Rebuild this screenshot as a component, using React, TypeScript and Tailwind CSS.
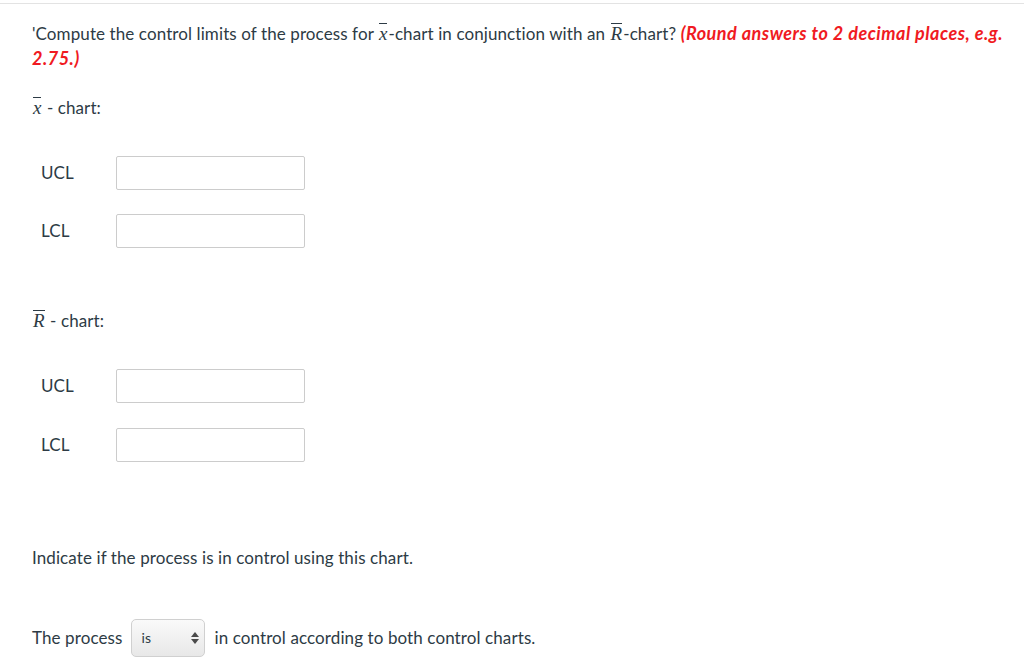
import React from "react";

const TEXT = "text-[#2d3b45]";

function Bar({ children }: { children: React.ReactNode }) {
  // variable with a bar over it, as in the MathJax rendering
  return (
    <span className="inline-block italic font-['Liberation_Serif',serif] text-[19px] leading-[17px] tracking-normal border-t-[1.5px] border-[#2d3b45] pt-[1px] mx-[1px]">
      {children}
    </span>
  );
}

function LimitRow({ label }: { label: string }) {
  return (
    <div className="flex items-center pl-[9px]">
      <span className="w-[75px]">{label}</span>
      <input
        type="text"
        className="w-[189px] h-[34px] border border-[#cccccc] rounded-[2px] bg-white outline-none"
      />
    </div>
  );
}

export default function App() {
  return (
    <div className={`min-h-[660px] bg-white font-['Lato','Noto_Sans',sans-serif] ${TEXT}`}>
      <div className="pt-[3px]">
        <div className="border-t border-[#e3e3e3]" />
      </div>
      <div className="pl-[32px] pr-[8px] pt-[17px] text-[17px] leading-[24px] tracking-[0.1px]">
        <p>
          'Compute the control limits of the process for <Bar>x</Bar>-chart in conjunction with an{" "}
          <Bar>R</Bar>-chart?{" "}
          <span className="font-bold italic text-[18px] tracking-[0.5px] text-[#f01a22]">
            (Round answers to 2 decimal places, e.g.
            <br />
            2.75.)
          </span>
        </p>

        <p className="mt-[25px]">
          <Bar>x</Bar> - chart:
        </p>

        <div className="mt-[36px] flex flex-col gap-[24px]">
          <LimitRow label="UCL" />
          <LimitRow label="LCL" />
        </div>

        <p className="mt-[61px]">
          <Bar>R</Bar> - chart:
        </p>

        <div className="mt-[36px] flex flex-col gap-[25px]">
          <LimitRow label="UCL" />
          <LimitRow label="LCL" />
        </div>

        <p className="mt-[84px]">Indicate if the process is in control using this chart.</p>

        <div className="mt-[49px] flex items-center gap-[9px]">
          <span>The process</span>
          <div className="relative w-[74px] h-[38px] rounded-[5px] border border-[#d0d0d0] bg-gradient-to-b from-[#fafafa] to-[#e8e8e8] flex items-center pl-[9px] text-[14px]">
            <span>is</span>
            <svg
              className="absolute right-[5px] top-1/2 -translate-y-1/2"
              width="8"
              height="12"
              viewBox="0 0 8 12"
            >
              <path d="M4 0 L8 5 L0 5 Z" fill="#4a4a4a" />
              <path d="M0 7 L8 7 L4 12 Z" fill="#4a4a4a" />
            </svg>
          </div>
          <span>in control according to both control charts.</span>
        </div>
      </div>
    </div>
  );
}
